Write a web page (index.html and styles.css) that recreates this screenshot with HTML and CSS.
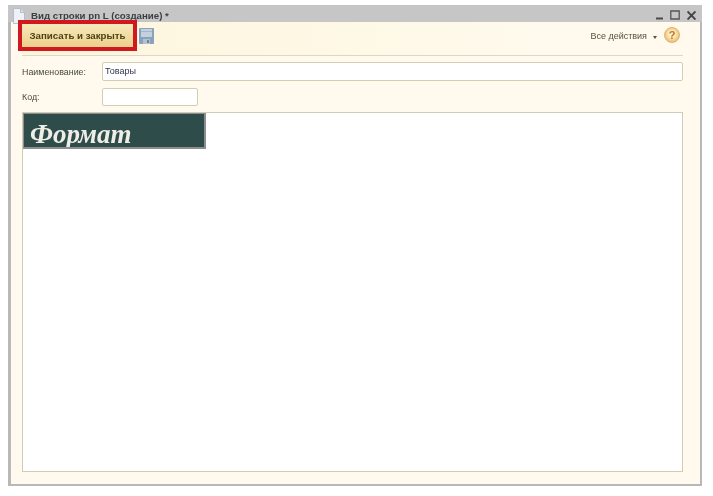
FILE: index.html
```html
<!DOCTYPE html>
<html lang="ru">
<head>
<meta charset="utf-8">
<title>Вид строки pn L (создание) *</title>
<link rel="stylesheet" href="styles.css">
</head>
<body>
<div class="window">
  <header class="titlebar">
    <svg class="doc-icon" width="12" height="16" viewBox="0 0 12 16"><path d="M.5.5h7l4 4v11H.5z" fill="#eef1f6" stroke="#b4bdcb"/><path d="M7.500.5v4h4" fill="#d8dfea" stroke="#b4bdcb"/></svg>
    <span class="title">Вид строки pn L (создание) *</span>
    <span class="controls">
      <svg width="7" height="10" viewBox="0 0 7 10"><path d="M0 8.500h7" stroke="#4a4a4a" stroke-width="2"/></svg>
      <svg width="10" height="10" viewBox="0 0 10 10"><path d="M.8 1h8.400v8H.8z" fill="none" stroke="#555" stroke-width="1.300"/></svg>
      <svg width="9" height="10" viewBox="0 0 9 10"><path d="M.5 1.500l8 8M8.500 1.500l-8 8" fill="none" stroke="#444" stroke-width="1.900"/></svg>
    </span>
  </header>
  <div class="body">
    <div class="toolbar">
      <button class="primary">Записать и закрыть</button>
      <svg class="save" width="15" height="16" viewBox="0 0 15 16"><rect width="15" height="16" rx="1" fill="#8aa2bb"/><rect x="2" y="1" width="11" height="8" fill="#c3d0dd"/><rect x="2" y="3" width="11" height="1" fill="#a3b6c9"/><rect x="4" y="11" width="7" height="5" fill="#b4c1cf"/><rect x="8" y="12" width="2" height="3" fill="#6f87a2"/></svg>
      <span class="actions">Все действия<i class="caret"></i></span>
      <span class="help">?</span>
    </div>
    <div class="row">
      <label class="lbl">Наименование:</label>
      <div class="field wide">Товары</div>
    </div>
    <div class="row row-code">
      <label class="lbl">Код:</label>
      <div class="field short"></div>
    </div>
    <div class="sheet">
      <div class="banner">Формат</div>
    </div>
  </div>
</div>
</body>
</html>
```
FILE: styles.css
```css
* { box-sizing: border-box; }
html, body { margin: 0; height: 100%; background: #fff; overflow: hidden; }
body { padding: 5px 11px 0 8px; font-family: "Liberation Sans", Arial, sans-serif; }
.window {
  width: 694px;
  height: 481px;
  display: flex;
  flex-direction: column;
  background: #fffaed;
  border: 2px solid #b8b8b8;
  border-left-width: 3px;
  border-top: 0;
  filter: blur(.4px);
}
.titlebar {
  height: 17px;
  flex: none;
  margin: 0 -2px 0 -3px;
  padding: 0 6px 0 5px;
  background: #c6c6c6;
  display: flex;
  align-items: center;
  position: relative;
}
.doc-icon { margin-top: 5px; flex: none; }
.title { margin-left: 6px; font-size: 9.700px; font-weight: 700; color: #3a3f44; margin-top: 4px; }
.controls { margin-left: auto; display: flex; gap: 7px; align-items: center; margin-top: 2px; }
.body { flex: 1; display: flex; flex-direction: column; padding: 0 17px 12px 11px; min-height: 0; }
.toolbar {
  height: 34px;
  flex: none;
  padding-top: 2px;
  display: flex;
  align-items: flex-start;
  border-bottom: 1px solid #dcd8c2;
  position: relative;
  background: linear-gradient(90deg, #fdf5dc, #fffaed 80%);
}
.primary {
  width: 111px;
  height: 23px;
  margin: 0;
  padding: 0;
  border: 0;
  outline: 4px solid #d0191f;
  background: linear-gradient(#f7e9bb, #ecd08c);
  font: 700 9.700px "Liberation Sans", Arial, sans-serif;
  color: #4a4218;
}
.save { margin: 4px 0 0 6px; }
.actions { margin-left: auto; margin-top: 7px; font-size: 9px; color: #55523c; display: flex; align-items: center; }
.caret { margin-left: 6px; margin-top: 2px; border: 2.500px solid transparent; border-top: 3px solid #55523c; border-bottom: 0; }
.help {
  width: 16px;
  height: 16px;
  margin: 3px 3px 0 7px;
  border-radius: 50%;
  background: radial-gradient(circle at 50% 45%, #fff0cc 25%, #eab968 80%);
  border: 1px solid #e0b36a;
  color: #b8781f;
  font-size: 11px;
  font-weight: 700;
  text-align: center;
  line-height: 14px;
}
.row { display: flex; align-items: center; margin-top: 6px; height: 19px; flex: none; }
.row-code { height: 18px; margin-top: 7px; }
.lbl { width: 80px; font-size: 8.900px; color: #4a4a40; }
.field { height: 100%; background: #fff; border: 1px solid #d2cfb3; border-radius: 2px; font-size: 9px; line-height: 17px; padding-left: 2px; color: #30384a; }
.wide { flex: 1; }
.short { width: 96px; }
.sheet { flex: 1; margin-top: 6px; background: #fff; border: 1px solid #cfcdb8; min-height: 0; }
.banner {
  width: 183px;
  height: 36px;
  background: #2e4c4a;
  border: 1px solid #8d8d8d;
  border-right-width: 2px;
  border-bottom-width: 2px;
  color: #eeeee6;
  font: italic 700 27px/40px "Liberation Serif", "Times New Roman", serif;
  padding-left: 6px;
  overflow: hidden;
}
```
